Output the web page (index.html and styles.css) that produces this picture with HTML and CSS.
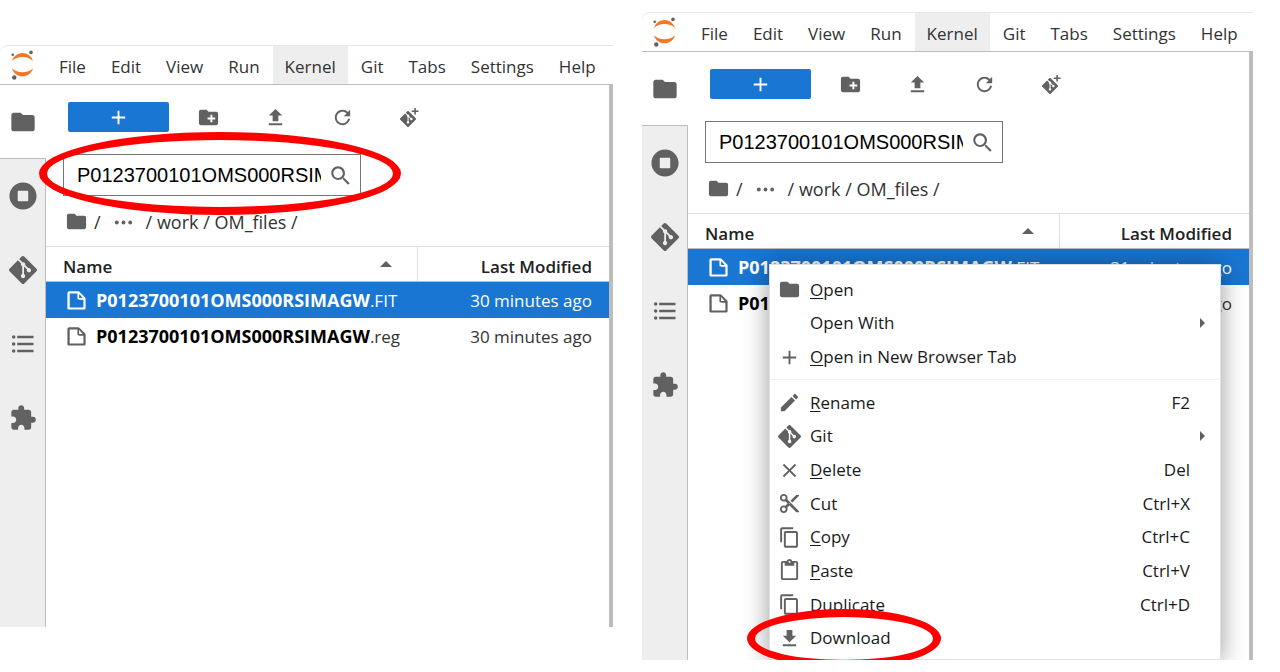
FILE: index.html
```html
<!DOCTYPE html>
<html lang="en">
<head>
<meta charset="utf-8">
<title>JupyterLab file browser</title>
<link rel="stylesheet" href="styles.css">
</head>
<body>
<svg class="sprite" aria-hidden="true">
  <symbol id="jupyter" viewBox="0 0 28 32">
    <path fill="#f37726" d="M3 12C6 1.200 21 1.200 24 12C19 6.500 8 6.500 3 12z"/>
    <path fill="#f37726" d="M3 19.300C8 24.500 19 24.500 24 19.300C21 30 6 30 3 19.300z"/>
    <circle cx="3.700" cy="5.700" r="1.300" fill="#616161"/><circle cx="22" cy="3.400" r="1.800" fill="#616161"/><circle cx="5.300" cy="28.500" r="2.200" fill="#616161"/>
  </symbol>
  <symbol id="folder" viewBox="0 0 24 24"><path d="M10 4H4c-1.100 0-1.990.9-1.990 2L2 18c0 1.100.9 2 2 2h16c1.100 0 2-.9 2-2V8c0-1.100-.9-2-2-2h-8l-2-2z"/></symbol>
  <symbol id="new-folder" viewBox="0 0 24 24"><path d="M20 6h-8l-2-2H4c-1.110 0-1.990.89-1.990 2L2 18c0 1.110.89 2 2 2h16c1.110 0 2-.89 2-2V8c0-1.110-.89-2-2-2zm-1 8h-3v3h-2v-3h-3v-2h3V9h2v3h3v2z"/></symbol>
  <symbol id="upload" viewBox="0 0 24 24"><path d="M9 16h6v-6h4l-7-7-7 7h4zm-4 2h14v2H5z"/></symbol>
  <symbol id="refresh" viewBox="0 0 18 18"><path d="M9 13.500c-2.490 0-4.500-2.010-4.500-4.500S6.510 4.500 9 4.500c1.240 0 2.360.52 3.170 1.330L10 8h5V3l-1.760 1.760C12.150 3.680 10.660 3 9 3 5.690 3 3.010 5.690 3.010 9S5.690 15 9 15c2.970 0 5.430-2.160 5.900-5h-1.520c-.46 2-2.240 3.500-4.380 3.500z"/></symbol>
  <symbol id="search" viewBox="0 0 18 18"><path d="M12.100 10.900h-.7l-.2-.2c.8-.9 1.300-2.200 1.300-3.500 0-3-2.400-5.400-5.400-5.400S1.800 4.200 1.800 7.100s2.400 5.400 5.400 5.400c1.300 0 2.500-.5 3.500-1.300l.2.200v.7l4.100 4.100 1.200-1.200-4.200-4.100zm-5 0c-2.100 0-3.700-1.700-3.700-3.700s1.700-3.700 3.700-3.700 3.700 1.700 3.700 3.700-1.600 3.700-3.700 3.700z"/></symbol>
  <symbol id="running" viewBox="0 0 512 512"><path d="M256 8C119 8 8 119 8 256s111 248 248 248 248-111 248-248S393 8 256 8zm96 328c0 8.800-7.200 16-16 16H176c-8.800 0-16-7.200-16-16V176c0-8.800 7.200-16 16-16h160c8.800 0 16 7.200 16 16v160z"/></symbol>
  <symbol id="toc" viewBox="0 0 24 24"><path d="M7 5h14v2H7zM7 11h14v2H7zM7 17h14v2H7z"/><circle cx="4" cy="6" r="1.500"/><circle cx="4" cy="12" r="1.500"/><circle cx="4" cy="18" r="1.500"/></symbol>
  <symbol id="extension" viewBox="0 0 24 24"><path d="M20.500 11H19V7c0-1.100-.9-2-2-2h-4V3.500C13 2.120 11.880 1 10.500 1S8 2.120 8 3.500V5H4c-1.100 0-1.990.9-1.990 2v3.800H3.500c1.490 0 2.700 1.210 2.700 2.700s-1.210 2.700-2.700 2.700H2V20c0 1.100.9 2 2 2h3.800v-1.500c0-1.490 1.210-2.700 2.700-2.700 1.490 0 2.700 1.210 2.700 2.700V22H17c1.100 0 2-.9 2-2v-4h1.500c1.380 0 2.500-1.120 2.500-2.500S21.880 11 20.500 11z"/></symbol>
  <symbol id="git" viewBox="0 0 24 24"><path d="M23.546 10.930L13.067.452c-.604-.603-1.582-.603-2.188 0L8.708 2.627l2.760 2.760c.645-.215 1.379-.07 1.889.441.516.515.658 1.258.438 1.900l2.658 2.660c.645-.223 1.387-.078 1.900.435.721.72.721 1.884 0 2.604-.719.719-1.881.719-2.600 0-.539-.541-.674-1.337-.404-1.996L12.860 8.955v6.525c.176.086.342.203.488.348.713.721.713 1.883 0 2.600-.719.721-1.889.721-2.609 0-.719-.719-.719-1.879 0-2.598.182-.18.387-.316.605-.406V8.835c-.217-.091-.424-.222-.6-.401-.545-.545-.676-1.342-.396-2.009L7.636 3.700.45 10.881c-.6.605-.6 1.584 0 2.189l10.480 10.477c.604.604 1.582.604 2.186 0l10.430-10.430c.605-.603.605-1.582 0-2.187"/></symbol>
  <symbol id="git-clone" viewBox="0 0 23 23"><use href="#git" x="2" y="5" width="16" height="16"/><path d="M16.300 2h1.600v2.500h2.600V6h-2.600v2.600h-1.600V6h-2.600V4.500h2.600z"/></symbol>
  <symbol id="file" viewBox="0 0 22 22"><path d="M19.300 8.200l-5.500-5.500c-.3-.3-.7-.5-1.200-.5H3.900c-.8.1-1.600.9-1.600 1.800v14.100c0 .9.7 1.600 1.600 1.600h14.200c.9 0 1.600-.7 1.600-1.600V9.400c.1-.5-.1-.9-.4-1.200zm-5.800-3.300l3.400 3.600h-3.400V4.900zm3.900 12.700H4.700c-.1 0-.2 0-.2-.2V4.700c0-.2.1-.3.2-.3h7.200v4.400s0 .8.3 1.100c.3.3 1.100.3 1.100.3h4.300v7.200s-.1.200-.2.200z"/></symbol>
  <symbol id="dots" viewBox="0 0 24 24"><circle cx="5" cy="12" r="2"/><circle cx="12" cy="12" r="2"/><circle cx="19" cy="12" r="2"/></symbol>
  <symbol id="plus" viewBox="0 0 24 24"><path d="M19 13h-6v6h-2v-6H5v-2h6V5h2v6h6z"/></symbol>
  <symbol id="edit" viewBox="0 0 24 24"><path d="M3 17.250V21h3.750L17.810 9.940l-3.750-3.750L3 17.250zM20.710 7.040c.39-.39.39-1.020 0-1.410l-2.340-2.340c-.39-.39-1.020-.39-1.410 0l-1.830 1.830 3.750 3.750 1.830-1.830z"/></symbol>
  <symbol id="close" viewBox="0 0 24 24"><path d="M19 6.410L17.590 5 12 10.590 6.410 5 5 6.410 10.590 12 5 17.590 6.410 19 12 13.410 17.590 19 19 17.590 13.410 12z"/></symbol>
  <symbol id="cut" viewBox="0 0 24 24"><path d="M9.640 7.640c.23-.5.36-1.050.36-1.640 0-2.210-1.790-4-4-4S2 3.790 2 6s1.790 4 4 4c.59 0 1.140-.13 1.640-.36L10 12l-2.360 2.360C7.140 14.130 6.590 14 6 14c-2.210 0-4 1.790-4 4s1.790 4 4 4 4-1.790 4-4c0-.59-.13-1.140-.36-1.640L12 14l7 7h3v-1L9.640 7.640zM6 8c-1.100 0-2-.89-2-2s.9-2 2-2 2 .89 2 2-.9 2-2 2zm0 12c-1.100 0-2-.89-2-2s.9-2 2-2 2 .89 2 2-.9 2-2 2zm6-7.500c-.28 0-.5-.22-.5-.5s.22-.5.5-.5.5.22.5.5-.22.5-.5.5zM19 3l-6 6 2 2 7-7V3z"/></symbol>
  <symbol id="copy" viewBox="0 0 18 18"><path d="M11.900 1H3.200C2.400 1 1.700 1.700 1.700 2.500v10.200h1.500V2.500h8.700V1zM14.100 3.900h-8c-.8 0-1.500.7-1.500 1.500v10.200c0 .8.7 1.500 1.500 1.500h8c.8 0 1.500-.7 1.500-1.500V5.400c-.1-.8-.7-1.500-1.500-1.500zM14.100 15.500h-8V5.400h8v10.100z"/></symbol>
  <symbol id="paste" viewBox="0 0 24 24"><path d="M19 2h-4.180C14.400.84 13.300 0 12 0c-1.300 0-2.400.84-2.820 2H5c-1.100 0-2 .9-2 2v16c0 1.100.9 2 2 2h14c1.100 0 2-.9 2-2V4c0-1.100-.9-2-2-2zm-7 0c.55 0 1 .45 1 1s-.45 1-1 1-1-.45-1-1 .45-1 1-1zm7 18H5V4h2v3h10V4h2v16z"/></symbol>
  <symbol id="download" viewBox="0 0 24 24"><path d="M19 9h-4V3H9v6H5l7 7 7-7zM5 18v2h14v-2H5z"/></symbol>
</svg>

<main class="page">
  <section class="panel panel-search" aria-label="File search">
    <div class="window">
      <nav class="menubar">
        <svg class="logo"><use href="#jupyter"/></svg>
        <button>File</button><button>Edit</button><button>View</button><button>Run</button><button class="active">Kernel</button><button>Git</button><button>Tabs</button><button>Settings</button><button>Help</button>
      </nav>
      <div class="workspace">
        <div class="sidebar">
          <button class="current" aria-label="Files"><svg><use href="#folder"/></svg></button>
          <button aria-label="Running"><svg><use href="#running"/></svg></button>
          <button aria-label="Git"><svg><use href="#git"/></svg></button>
          <button aria-label="Contents"><svg><use href="#toc"/></svg></button>
          <button aria-label="Extensions"><svg><use href="#extension"/></svg></button>
        </div>
        <div class="browser">
          <div class="toolbar">
            <button class="launch" aria-label="New launcher"><svg class="icon"><use href="#plus"/></svg></button>
            <button aria-label="New folder"><svg class="icon"><use href="#new-folder"/></svg></button>
            <button aria-label="Upload"><svg class="icon"><use href="#upload"/></svg></button>
            <button aria-label="Refresh"><svg class="icon"><use href="#refresh"/></svg></button>
            <button aria-label="Clone"><svg class="icon"><use href="#git-clone"/></svg></button>
          </div>
          <label class="search"><input type="text" aria-label="Filter files" value="P0123700101OMS000RSIMAGW"><svg class="icon"><use href="#search"/></svg></label>
          <div class="crumbs"><svg class="icon"><use href="#folder"/></svg><span>/</span><svg class="icon more"><use href="#dots"/></svg><span>/ <a href="#work">work</a> / <a href="#om">OM_files</a> /</span></div>
          <table class="files">
            <thead><tr><th class="name"><span class="sort">Name</span></th><th class="modified">Last Modified</th></tr></thead>
            <tbody>
              <tr class="selected"><td><span class="file"><svg class="icon"><use href="#file"/></svg><span><b>P0123700101OMS000RSIMAGW</b>.FIT</span></span></td><td class="modified">30 minutes ago</td></tr>
              <tr><td><span class="file"><svg class="icon"><use href="#file"/></svg><span><b>P0123700101OMS000RSIMAGW</b>.reg</span></span></td><td class="modified">30 minutes ago</td></tr>
            </tbody>
          </table>
        </div>
      </div>
    </div>
    <div class="ring ring-search"></div>
  </section>

  <section class="panel panel-menu" aria-label="File context menu">
    <div class="window">
      <nav class="menubar">
        <svg class="logo"><use href="#jupyter"/></svg>
        <button>File</button><button>Edit</button><button>View</button><button>Run</button><button class="active">Kernel</button><button>Git</button><button>Tabs</button><button>Settings</button><button>Help</button>
      </nav>
      <div class="workspace">
        <div class="sidebar">
          <button class="current" aria-label="Files"><svg><use href="#folder"/></svg></button>
          <button aria-label="Running"><svg><use href="#running"/></svg></button>
          <button aria-label="Git"><svg><use href="#git"/></svg></button>
          <button aria-label="Contents"><svg><use href="#toc"/></svg></button>
          <button aria-label="Extensions"><svg><use href="#extension"/></svg></button>
        </div>
        <div class="browser">
          <div class="toolbar">
            <button class="launch" aria-label="New launcher"><svg class="icon"><use href="#plus"/></svg></button>
            <button aria-label="New folder"><svg class="icon"><use href="#new-folder"/></svg></button>
            <button aria-label="Upload"><svg class="icon"><use href="#upload"/></svg></button>
            <button aria-label="Refresh"><svg class="icon"><use href="#refresh"/></svg></button>
            <button aria-label="Clone"><svg class="icon"><use href="#git-clone"/></svg></button>
          </div>
          <label class="search"><input type="text" aria-label="Filter files" value="P0123700101OMS000RSIMAGW"><svg class="icon"><use href="#search"/></svg></label>
          <div class="crumbs"><svg class="icon"><use href="#folder"/></svg><span>/</span><svg class="icon more"><use href="#dots"/></svg><span>/ <a href="#work">work</a> / <a href="#om">OM_files</a> /</span></div>
          <table class="files">
            <thead><tr><th class="name"><span class="sort">Name</span></th><th class="modified">Last Modified</th></tr></thead>
            <tbody>
              <tr class="selected"><td><span class="file"><svg class="icon"><use href="#file"/></svg><span><b>P0123700101OMS000RSIMAGW</b>.FIT</span></span></td><td class="modified">31 minutes ago</td></tr>
              <tr><td><span class="file"><svg class="icon"><use href="#file"/></svg><span><b>P0123700101OMS000RSIMAGW</b>.reg</span></span></td><td class="modified">31 minutes ago</td></tr>
            </tbody>
          </table>
        </div>
      </div>
      <div class="context">
        <button><svg class="icon"><use href="#folder"/></svg><span><u>O</u>pen</span></button>
        <button class="submenu"><span class="icon"></span><span>Open With</span></button>
        <button><svg class="icon"><use href="#plus"/></svg><span><u>O</u>pen in New Browser Tab</span></button>
        <hr>
        <button><svg class="icon"><use href="#edit"/></svg><span><u>R</u>ename</span><kbd>F2</kbd></button>
        <button class="submenu"><svg class="icon"><use href="#git"/></svg><span>Git</span></button>
        <button><svg class="icon"><use href="#close"/></svg><span><u>D</u>elete</span><kbd>Del</kbd></button>
        <button><svg class="icon"><use href="#cut"/></svg><span>Cut</span><kbd>Ctrl+X</kbd></button>
        <button><svg class="icon"><use href="#copy"/></svg><span><u>C</u>opy</span><kbd>Ctrl+C</kbd></button>
        <button><svg class="icon"><use href="#paste"/></svg><span><u>P</u>aste</span><kbd>Ctrl+V</kbd></button>
        <button><svg class="icon"><use href="#copy"/></svg><span><u>D</u>uplicate</span><kbd>Ctrl+D</kbd></button>
        <button><svg class="icon"><use href="#download"/></svg><span>Download</span></button>
      </div>
    </div>
    <div class="ring ring-download"></div>
  </section>
</main>
</body>
</html>
```
FILE: styles.css
```css
* { box-sizing: border-box; }
body {
  margin: 0;
  background: #fff;
  color: #333;
  font: 17px/24px "Open Sans", "Noto Sans", sans-serif;
}
button {
  margin: 0;
  padding: 0;
  border: 0;
  background: none;
  color: inherit;
  font: inherit;
}
svg { fill: #616161; }
a { color: inherit; text-decoration: none; }
.sprite { position: absolute; width: 0; height: 0; }
.icon { flex: none; width: 23px; height: 23px; }

.page {
  display: flex;
  align-items: flex-start;
  gap: 29px;
  padding-right: 27px;
}
.panel { position: relative; min-width: 0; }
.panel-search { flex: 613 1 0; margin-top: 45px; }
.panel-menu { flex: 611 1 0; margin-top: 12px; }
.window {
  position: relative;
  display: flex;
  flex-direction: column;
  overflow: hidden;
  border-top: 1px solid #e6e6e6;
  border-top-left-radius: 8px;
}
.panel-search .window { min-height: 582px; }
.panel-menu .window { min-height: 648px; }

.menubar {
  display: flex;
  gap: 1px;
  height: 39px;
  border-bottom: 1px solid #bdbdbd;
}
.menubar button { padding: 4px 12px 0; }
.menubar .active { background: #eee; }
.logo { flex: none; width: 28px; height: 32px; margin: 3px 9px; }

.workspace {
  display: flex;
  flex: 1;
  border-right: 4px solid #bdbdbd;
}
.sidebar {
  width: 46px;
  background: #eee;
  border-right: 1px solid #bdbdbd;
}
.sidebar button {
  display: flex;
  align-items: center;
  justify-content: center;
  width: 45px;
  height: 74px;
}
.sidebar .current {
  width: 46px;
  padding-right: 1px;
  background: #fff;
  border-bottom: 1px solid #bdbdbd;
}
.sidebar svg { width: 28px; height: 28px; }

.browser { flex: 1; min-width: 0; }
.toolbar {
  display: flex;
  align-items: center;
  padding: 17px 0 0 22px;
}
.toolbar button {
  display: flex;
  justify-content: center;
  width: 67px;
}
.toolbar .launch {
  width: 101px;
  height: 30px;
  margin-right: 6px;
  align-items: center;
  background: #1976d2;
  border-radius: 2px;
}
.launch svg { fill: #fff; }
.search {
  display: flex;
  align-items: center;
  width: 298px;
  height: 42px;
  margin: 22px 0 0 17px;
  padding: 0 8px 0 13px;
  border: 1px solid #757575;
}
.search input {
  flex: 1;
  min-width: 0;
  margin-right: 8px;
  padding: 0;
  border: 0;
  outline: 0;
  background: none;
  color: #000;
  font: 20px/24px "Liberation Sans", sans-serif;
}
.crumbs {
  display: flex;
  align-items: center;
  height: 50px;
  padding: 1px 0 0 19px;
  font-size: 18px;
}
.crumbs span { margin-left: 6px; }
.more { margin: 2px 5px 0 11px; }

.files {
  width: 100%;
  border-collapse: collapse;
  border-top: 1px solid #e0e0e0;
}
.files th {
  height: 35px;
  padding: 5px 17px 0;
  border-bottom: 1px solid #bdbdbd;
  color: #212121;
  font-weight: 600;
  text-align: left;
}
.files td { height: 36px; padding: 2px 17px 0; }
.files .modified { width: 192px; text-align: right; }
.files th.modified { border-left: 1px solid #e0e0e0; }
.sort { display: flex; justify-content: space-between; align-items: center; }
.sort::after {
  content: "";
  margin: 0 8px 6px 0;
  border: 6px solid transparent;
  border-top: 0;
  border-bottom-color: #616161;
}
.file { display: flex; align-items: center; gap: 8px; margin-left: 3px; }
.file b { color: #000; font-size: 18px; }
.file .icon { margin-left: -1px; }
.selected { background: #1976d2; color: #fff; }
.selected b { color: #fff; }
.selected svg { fill: #fff; }

.context {
  position: absolute;
  top: 251px;
  bottom: 0;
  left: 127px;
  right: 32px;
  display: flex;
  flex-direction: column;
  padding: 8px 0 4px;
  background: #fff;
  border: 1px solid #e0e0e0;
  box-shadow: 0 2px 24px rgba(0, 0, 0, 0.4);
  color: #1a1a1a;
}
.context button {
  flex: 1;
  display: flex;
  align-items: center;
  gap: 9px;
  padding: 0 30px 0 8px;
}
.context kbd { margin-left: auto; font: inherit; }
.context u { text-underline-offset: 2px; text-decoration-thickness: 1px; }
.context hr {
  width: 100%;
  margin: 5px 0 6px;
  border: 0;
  border-top: 1px solid #eee;
}
.submenu::after {
  content: "";
  margin: 0 -15px 0 auto;
  border: 5px solid transparent;
  border-right: 0;
  border-left-color: #616161;
}

.ring {
  position: absolute;
  border: 8px solid #f00;
  border-radius: 50%;
}
.ring-search { top: 87px; left: 39px; width: 362px; height: 83px; }
.ring-download { top: 597px; left: 105px; width: 194px; height: 59px; }
```
